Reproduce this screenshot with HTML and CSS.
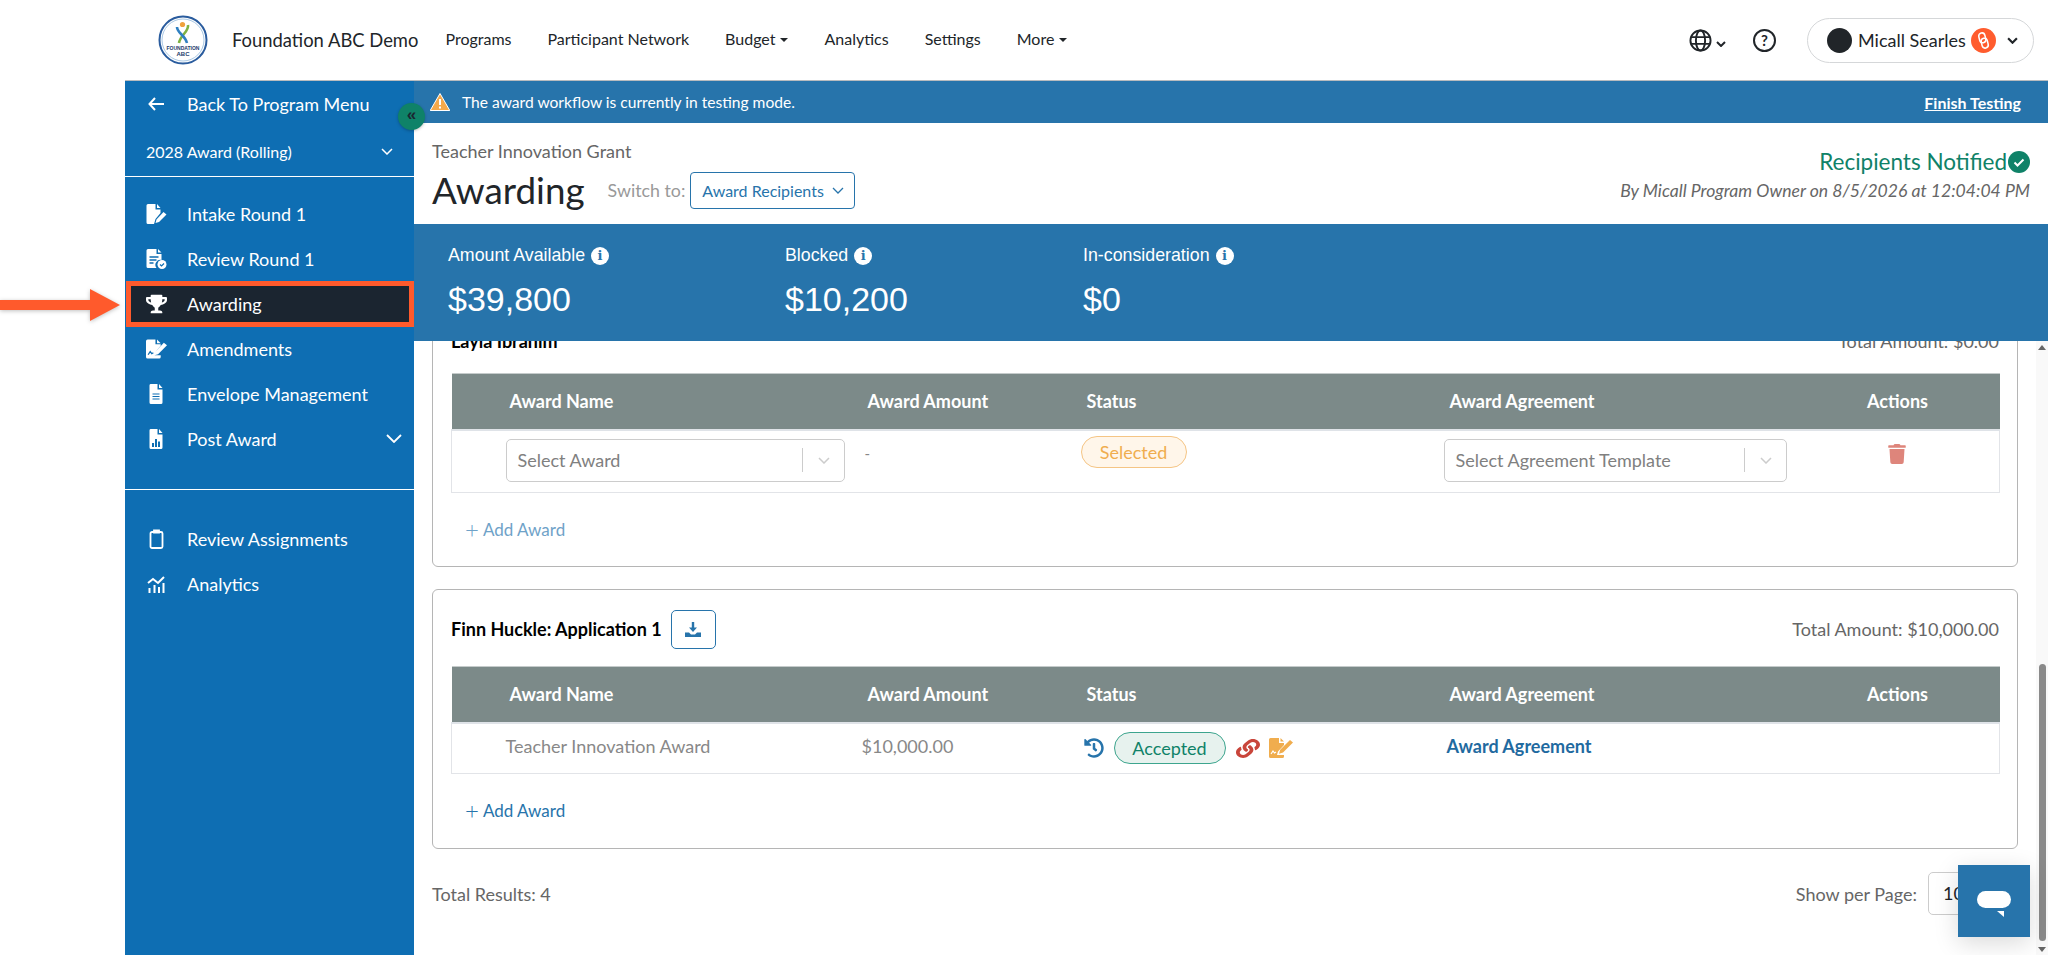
FILE: index.html
```html
<!DOCTYPE html>
<html lang="en">
<head>
    <meta charset="UTF-8">
    <meta name="viewport" content="width=device-width, initial-scale=1.0">
    <title>Awarding</title>
    <link rel="stylesheet" href="styles.css">
</head>
<body>
    <!-- top nav -->
    <header class="topnav">
        <svg class="logo" viewBox="0 0 50 50">
            <circle cx="25" cy="25" r="23.5" fill="#fff" stroke="#2a5c9e" stroke-width="2"/>
            <circle cx="25" cy="25" r="21" fill="none" stroke="#a9c8e4" stroke-width="1"/>
            <path d="M30 10c1 7-8 10-9 18" fill="none" stroke="#7fb241" stroke-width="2.6"/>
            <path d="M19 12c0 6 8 8 10 16" fill="none" stroke="#2f80c2" stroke-width="2.6"/>
            <circle cx="24.500" cy="9.500" r="2.600" fill="#f0a13c"/>
            <text x="25" y="35" class="logo-small">FOUNDATION</text>
            <text x="25" y="41" class="logo-big">ABC</text>
        </svg>
        <span class="brand">Foundation ABC Demo</span>
        <nav class="mainnav">
            <a>Programs</a>
            <a>Participant Network</a>
            <a class="caret">Budget</a>
            <a>Analytics</a>
            <a>Settings</a>
            <a class="caret">More</a>
        </nav>
        <div class="nav-right">
            <svg class="globe" viewBox="0 0 24 24" fill="none" stroke="#212529" stroke-width="2">
                <circle cx="12" cy="12" r="10.5"/>
                <ellipse cx="12" cy="12" rx="4.8" ry="10.5"/>
                <path d="M2 8.5h20M2 15.5h20"/>
            </svg>
            <svg class="chev-sm" viewBox="0 0 10 6" fill="none" stroke="#212529" stroke-width="2"><path d="M1 1l4 4 4-4"/></svg>
            <span class="help">?</span>
            <div class="user-pill">
                <span class="avatar"></span>
                <span class="user-name">Micall Searles</span>
                <svg class="user-badge" viewBox="0 0 24 24">
                    <circle cx="12" cy="12" r="12" fill="#ff5c2e"/>
                    <g fill="none" stroke="#fff" stroke-width="1.5" transform="rotate(-14 12 12)">
                        <rect x="8.500" y="4.500" width="6" height="9.500" rx="3"/>
                        <rect x="9.500" y="10" width="6" height="9.500" rx="3"/>
                    </g>
                </svg>
                <svg class="chev-user" viewBox="0 0 10 6" fill="none" stroke="#212529" stroke-width="2"><path d="M1 1l4 4 4-4"/></svg>
            </div>
        </div>
    </header>

    <div class="layout">
        <div class="gutter"></div>

        <aside class="sidebar">
            <div class="side-back">
                <svg class="back-arrow" viewBox="0 0 16 14" fill="none" stroke="#fff" stroke-width="2"><path d="M7 1L1.5 7 7 13M2 7h14"/></svg>
                <span>Back To Program Menu</span>
            </div>
            <div class="side-select">
                <span>2028 Award (Rolling)</span>
                <svg class="side-chev" viewBox="0 0 12 7" fill="none" stroke="#fff" stroke-width="1.5"><path d="M1 1l5 5 5-5"/></svg>
            </div>
            <ul class="side-menu first">
                <li><svg class="side-icon" viewBox="0 0 20 20" fill="#fff"><path d="M1.5 0H9v5.500h5V9l-5 6-1 3.500-.5 1.500h-6A1.500 1.500 0 0 1 0 18.500v-17A1.500 1.500 0 0 1 1.500 0zM10.500 0L14 4h-3.500zM17 8l3 2.500-7.500 7.500-3.500 1 1-3.500z"/></svg>Intake Round 1</li>
                <li><svg class="side-icon" viewBox="0 0 20 20"><path fill="#fff" d="M1.500 0H10v5h5v6a5 5 0 0 0-5 8H1.500A1.500 1.500 0 0 1 0 17.500v-16A1.500 1.500 0 0 1 1.500 0zM11.500 0L15 3.500h-3.500z"/><path stroke="#0e6eb3" stroke-width="1.500" d="M3 8h9M3 11h7M3 14h4"/><circle cx="15.500" cy="15.500" r="4.500" fill="#fff"/><path d="M13.500 15.500l1.500 1.500 2.500-2.500" fill="none" stroke="#0e6eb3" stroke-width="1.200"/></svg>Review Round 1</li>
                <li class="active"><svg class="side-icon" viewBox="0 0 576 512" fill="#fff"><path d="M552 64H448V24c0-13.300-10.700-24-24-24H152c-13.300 0-24 10.700-24 24v40H24C10.700 64 0 74.700 0 88v56c0 35.700 22.500 72.400 61.900 100.700 31.500 22.700 69.800 37.100 110 41.700C203.300 338.500 240 360 240 360v72h-48c-35.300 0-64 20.700-64 56v12c0 6.600 5.400 12 12 12h296c6.600 0 12-5.400 12-12v-12c0-35.300-28.700-56-64-56h-48v-72s36.700-21.500 68.100-73.600c40.300-4.600 78.700-19 110-41.700 39.300-28.300 61.900-65 61.900-100.700V88c0-13.300-10.700-24-24-24zM99.300 192.800C74.900 175.200 64 155.600 64 144v-16h64.200c1 32.600 5.800 61.200 12.800 86.200-15.100-5.200-29.200-12.400-41.700-21.400zM512 144c0 16.100-17.700 36.100-35.300 48.800-12.500 9-26.700 16.200-41.800 21.400 7-25 11.800-53.600 12.800-86.200H512v16z"/></svg>Awarding</li>
                <li><svg class="side-icon" viewBox="0 0 20 18"><path fill="#fff" d="M1.500 0H9v4.500h5V6l-5 5.500-1 3.500 6 0v1.500A1.500 1.500 0 0 1 12.500 18h-11A1.500 1.500 0 0 1 0 16.500v-15A1.500 1.500 0 0 1 1.500 0zM10.500 0L14 3.500h-3.500zM17 3l3 2.500-8.500 8.500-3.500 1 1-3.500z"/><path d="M2 14.500l2-3 1.500 2 1.500-1" fill="none" stroke="#0e6eb3" stroke-width="1.200"/></svg>Amendments</li>
                <li><svg class="side-icon" viewBox="0 0 20 20"><path fill="#fff" d="M4 0h7v5.500h5v13A1.500 1.500 0 0 1 14.500 20h-10A1.500 1.500 0 0 1 3 18.500v-17A1.500 1.500 0 0 1 4 0zM12.500 0L16 4h-3.500z"/><path stroke="#0e6eb3" stroke-width="1.100" d="M6 10h7M6 12.500h7M6 15h7"/></svg>Envelope Management</li>
                <li><svg class="side-icon" viewBox="0 0 20 20"><path fill="#fff" d="M4 0h7v5.500h5v13A1.500 1.500 0 0 1 14.500 20h-10A1.500 1.500 0 0 1 3 18.500v-17A1.500 1.500 0 0 1 4 0zM12.500 0L16 4h-3.500z"/><path stroke="#0e6eb3" stroke-width="2" d="M6.500 18v-4M9.500 18v-8M12.500 18v-5.500"/></svg>Post Award<svg class="post-chev" viewBox="0 0 16 9" fill="none" stroke="#fff" stroke-width="1.800"><path d="M1 1l7 7 7-7"/></svg></li>
            </ul>
            <ul class="side-menu second">
                <li><svg class="side-icon" viewBox="0 0 20 20" fill="none" stroke="#fff" stroke-width="1.800"><rect x="4" y="3" width="12" height="16" rx="1.500"/><path d="M7.500 3.500h5V1.500h-5z" fill="#fff"/></svg>Review Assignments</li>
                <li><svg class="side-icon" viewBox="0 0 20 20" fill="none" stroke="#fff" stroke-width="2"><path d="M3 19v-5M8 19v-8M12.500 19v-6M17 19V9M1.500 9l5-4 5 4 6-6"/></svg>Analytics</li>
            </ul>
            <span class="collapse-btn">«</span>
        </aside>

        <main class="main">
            <div class="test-banner">
                <svg class="warn" viewBox="0 0 20 18"><path d="M10 0.500L19.800 17.500H0.200z" fill="#f5a94a" stroke="#fff" stroke-width="1"/><path d="M10 6v6M10 13.500v2" stroke="#fff" stroke-width="2"/></svg>
                <span class="test-text">The award workflow is currently in testing mode.</span>
                <a class="finish">Finish Testing</a>
            </div>

            <section class="page-head">
                <div>
                    <div class="grant-name">Teacher Innovation Grant</div>
                    <div class="title-row">
                        <h1>Awarding</h1>
                        <span class="switch-label">Switch to:</span>
                        <div class="switch-btn">Award Recipients
                            <svg viewBox="0 0 12 7" fill="none" stroke="#2774ab" stroke-width="1.300"><path d="M1 1l5 5 5-5"/></svg>
                        </div>
                    </div>
                </div>
                <div class="head-right">
                    <div class="notified">Recipients Notified<svg viewBox="0 0 22 22"><circle cx="11" cy="11" r="11" fill="#0f8268"/><path d="M6.500 11.500l3 3 6-6" fill="none" stroke="#fff" stroke-width="2"/></svg></div>
                    <div class="notified-by">By Micall Program Owner on 8/5/2026 at 12:04:04 PM</div>
                </div>
            </section>

            <section class="stats">
                <div class="stat stat-a">
                    <div class="stat-label">Amount Available <span class="info">i</span></div>
                    <div class="stat-value">$39,800</div>
                </div>
                <div class="stat stat-b">
                    <div class="stat-label">Blocked <span class="info">i</span></div>
                    <div class="stat-value">$10,200</div>
                </div>
                <div class="stat">
                    <div class="stat-label">In-consideration <span class="info">i</span></div>
                    <div class="stat-value">$0</div>
                </div>
            </section>

            <div class="content">
                <section class="card card-clipped">
                    <div class="card-head">
                        <div class="applicant">Layla Ibrahim</div>
                        <div class="total">Total Amount: $0.00</div>
                    </div>
                    <table class="awards">
                        <colgroup><col class="c0"><col class="c1"><col class="c2"><col class="c3"><col class="c4"><col class="c5"></colgroup>
                        <thead>
                            <tr><th></th><th>Award Name</th><th>Award Amount</th><th>Status</th><th>Award Agreement</th><th class="act">Actions</th></tr>
                        </thead>
                        <tbody>
                            <tr class="edit-row">
                                <td></td>
                                <td><div class="select-box"><span>Select Award</span><i class="sel-sep"></i><svg viewBox="0 0 12 7" fill="none" stroke="#ccc" stroke-width="1.500"><path d="M1 1l5 5 5-5"/></svg></div></td>
                                <td class="dash">-</td>
                                <td><span class="pill pill-selected">Selected</span></td>
                                <td><div class="select-box wide"><span>Select Agreement Template</span><i class="sel-sep"></i><svg viewBox="0 0 12 7" fill="none" stroke="#ccc" stroke-width="1.500"><path d="M1 1l5 5 5-5"/></svg></div></td>
                                <td class="act"><svg class="trash" viewBox="0 0 448 512" fill="#de857b"><path d="M432 32H312l-9.400-18.700A24 24 0 0 0 281.100 0H166.800a23.720 23.720 0 0 0-21.400 13.300L136 32H16A16 16 0 0 0 0 48v32a16 16 0 0 0 16 16h416a16 16 0 0 0 16-16V48a16 16 0 0 0-16-16zM53.200 467a48 48 0 0 0 47.900 45h245.800a48 48 0 0 0 47.900-45L416 128H32z"/></svg></td>
                            </tr>
                        </tbody>
                    </table>
                    <a class="add-award faded"><span class="plus">+</span> Add Award</a>
                </section>

                <section class="card">
                    <div class="card-head">
                        <div class="applicant">Finn Huckle: Application 1
                            <span class="dl-btn"><svg viewBox="0 0 16 15" fill="#2774ab"><path d="M6.800 0h2.400v5.500H12L8 10 4 5.500h2.800zM0 10.500h4l2 2h4l2-2h4V15H0z"/></svg></span>
                        </div>
                        <div class="total">Total Amount: $10,000.00</div>
                    </div>
                    <table class="awards">
                        <colgroup><col class="c0"><col class="c1"><col class="c2"><col class="c3"><col class="c4"><col class="c5"></colgroup>
                        <thead>
                            <tr><th></th><th>Award Name</th><th>Award Amount</th><th>Status</th><th>Award Agreement</th><th class="act">Actions</th></tr>
                        </thead>
                        <tbody>
                            <tr class="done-row">
                                <td></td>
                                <td class="muted">Teacher Innovation Award</td>
                                <td class="muted">$10,000.00</td>
                                <td>
                                    <div class="status-cell">
                                        <svg class="ic-history" viewBox="0 0 512 512" fill="#2774ab"><path d="M504 255.531c.253 136.640-111.180 248.372-247.820 248.468-59.015.042-113.223-20.530-155.822-54.911-11.077-8.940-11.905-25.541-1.839-35.607l11.267-11.267c8.609-8.609 22.353-9.551 31.891-1.984C173.062 425.135 212.781 440 256 440c101.705 0 184-82.311 184-184 0-101.705-82.311-184-184-184-48.814 0-93.149 18.969-126.068 49.932l50.754 50.754c10.080 10.080 2.941 27.314-11.313 27.314H24c-8.837 0-16-7.163-16-16V38.627c0-14.254 17.234-21.393 27.314-11.314l49.372 49.372C129.209 34.136 189.552 8 256 8c136.810 0 247.747 110.780 248 247.531zm-180.912 78.784l9.823-12.630c8.138-10.463 6.253-25.542-4.210-33.679L288 256.349V152c0-13.255-10.745-24-24-24h-16c-13.255 0-24 10.745-24 24v135.651l65.409 50.874c10.463 8.137 25.541 6.253 33.679-4.210z"/></svg>
                                        <span class="pill pill-accepted">Accepted</span>
                                        <svg class="ic-link" viewBox="0 0 512 512" preserveAspectRatio="none" fill="#c9453a"><path d="M326.612 185.391c59.747 59.809 58.927 155.698.36 214.590-.11.12-.24.25-.36.37l-67.200 67.200c-59.270 59.270-155.699 59.262-214.960 0-59.270-59.260-59.270-155.700 0-214.960l37.106-37.106c9.840-9.840 26.786-3.300 27.294 10.606.648 17.722 3.826 35.527 9.690 52.721 1.986 5.822.567 12.262-3.783 16.612l-13.087 13.087c-28.026 28.026-28.905 73.660-1.155 101.960 28.024 28.579 74.086 28.749 102.325.51l67.200-67.190c28.191-28.191 28.073-73.757 0-101.830-3.701-3.694-7.429-6.564-10.341-8.569a16.037 16.037 0 0 1-6.947-12.606c-.396-10.567 3.348-21.456 11.698-29.806l21.054-21.055c5.521-5.521 14.182-6.199 20.584-1.731a152.482 152.482 0 0 1 20.522 17.197zM467.547 44.449c-59.261-59.262-155.690-59.270-214.960 0l-67.200 67.200c-.12.12-.25.25-.36.37-58.566 58.892-59.387 154.781.36 214.590a152.454 152.454 0 0 0 20.521 17.196c6.402 4.468 15.064 3.789 20.584-1.731l21.054-21.055c8.350-8.350 12.094-19.239 11.698-29.806a16.037 16.037 0 0 0-6.947-12.606c-2.912-2.005-6.640-4.875-10.341-8.569-28.073-28.073-28.191-73.639 0-101.830l67.200-67.190c28.239-28.239 74.300-28.069 102.325.51 27.750 28.300 26.872 73.934-1.155 101.960l-13.087 13.087c-4.350 4.350-5.769 10.790-3.783 16.612 5.864 17.194 9.042 34.999 9.690 52.721.509 13.906 17.454 20.446 27.294 10.606l37.106-37.106c59.271-59.259 59.271-155.699.001-214.959z"/></svg>
                                        <svg class="ic-sign" viewBox="0 0 24 20"><path fill="#f0ad4e" d="M1.500 0H10v5h5v2l-6 6.500-1 3.500h7v1.500a1.500 1.500 0 0 1-1.500 1.500h-12A1.500 1.500 0 0 1 0 18.500v-17A1.500 1.500 0 0 1 1.500 0zM11.500 0L15 3.500h-3.500zM21 2l3 2.500-10 10-4 1.200 1.200-4z"/><path d="M2 16l2-3 1.500 2 1.500-1" fill="none" stroke="#fff" stroke-width="1.200"/></svg>
                                    </div>
                                </td>
                                <td class="agreement-cell"><a class="agreement">Award Agreement</a></td>
                                <td></td>
                            </tr>
                        </tbody>
                    </table>
                    <a class="add-award"><span class="plus">+</span> Add Award</a>
                </section>

                <div class="list-foot">
                    <span>Total Results: 4</span>
                    <div class="per-page">Show per Page: <span class="per-box">10</span></div>
                </div>

                <div class="scrollbar">
                    <i class="sb-up"></i>
                    <i class="sb-thumb"></i>
                    <i class="sb-down"></i>
                </div>
            </div>
        </main>
    </div>

    <!-- annotation arrow over the screenshot -->
    <svg class="callout" viewBox="0 0 120 32"><path d="M0 11h90V0l30 16-30 16V21H0z" fill="#ff5a2c"/></svg>

    <div class="chat-btn">
        <svg viewBox="0 0 34 26"><rect width="34" height="17" rx="8.5" fill="#fff"/><path d="M20 20h7v6z" fill="#fff"/></svg>
    </div>
</body>
</html>
```

FILE: styles.css
```css
:root {
    --side-blue: #0e6eb3;
    --band-blue: #2774ab;
    --green: #0f8268;
    --orange: #ff5a2c;
    --amber: #f0ad4e;
    --head-grey: #7c8a89;
    --rule: #b9bcbf;
}

* {
    box-sizing: border-box;
}

body {
    margin: 0;
    height: 955px;
    overflow: hidden;
    background: #fff;
    color: #212529;
    font-family: Lato, "Liberation Sans", sans-serif;
    font-size: 16px;
}

/* top nav */
.topnav {
    display: flex;
    align-items: center;
    height: 80px;
    padding-left: 158px;
}

.logo {
    width: 50px;
    height: 50px;
}

.logo-small,
.logo-big {
    font-family: "Liberation Sans", sans-serif;
    font-weight: 700;
    text-anchor: middle;
    fill: #233a6b;
}

.logo-small {
    font-size: 5px;
}

.logo-big {
    font-size: 6px;
}

.brand {
    margin-left: 24px;
    font-size: 18.4px;
}

.mainnav {
    display: flex;
    gap: 36px;
    margin-left: 27px;
    margin-bottom: 4px;
    font-size: 16px;
}

.caret::after {
    content: "";
    display: inline-block;
    margin-left: 5px;
    vertical-align: 3px;
    border-top: 4px solid #212529;
    border-left: 4px solid transparent;
    border-right: 4px solid transparent;
}

.nav-right {
    display: flex;
    align-items: center;
    margin-left: auto;
    margin-right: 14px;
}

.globe {
    width: 23px;
    height: 23px;
}

.chev-sm {
    width: 10px;
    height: 6px;
    margin: 7px 0 0 4px;
}

.help {
    display: flex;
    align-items: center;
    justify-content: center;
    width: 23px;
    height: 23px;
    margin-left: 27px;
    border: 2px solid #212529;
    border-radius: 50%;
    font-size: 15px;
    font-weight: 700;
}

.user-pill {
    display: flex;
    align-items: center;
    width: 227px;
    height: 45px;
    margin-left: 31px;
    padding-left: 19px;
    border: 1px solid #d5d7d9;
    border-radius: 23px;
}

.avatar {
    width: 25px;
    height: 25px;
    border-radius: 50%;
    background: #212529;
}

.user-name {
    margin-left: 6px;
    font-size: 18px;
}

.user-badge {
    width: 25px;
    height: 25px;
    margin-left: 5px;
}

.chev-user {
    width: 11px;
    height: 7px;
    margin-left: 11px;
}

/* shell */
.layout {
    display: flex;
    height: 875px;
}

.gutter {
    width: 125px;
}

.sidebar {
    position: relative;
    width: 289px;
    border-top: 1px solid var(--rule);
    background: var(--side-blue);
    color: #fff;
    font-size: 18px;
}

.side-back {
    display: flex;
    align-items: center;
    height: 47px;
    padding: 0 0 2px 23px;
}

.back-arrow {
    width: 16px;
    height: 14px;
    margin-right: 23px;
}

.side-select {
    display: flex;
    align-items: center;
    justify-content: space-between;
    height: 49px;
    padding: 0 21px 2px;
    border-bottom: 1px solid #fff;
    font-size: 16px;
}

.side-chev {
    width: 12px;
    height: 7px;
}

.side-menu {
    margin: 0;
    padding: 0;
    list-style: none;
}

.side-menu li {
    display: flex;
    align-items: center;
    position: relative;
    height: 45px;
    padding-left: 21px;
}

.side-menu.first {
    padding-top: 14px;
    height: 313px;
    border-bottom: 1px solid #fff;
}

.side-menu.second {
    padding-top: 26px;
}

.side-icon {
    width: 21px;
    height: 20px;
    margin-right: 20px;
    flex: none;
}

.side-menu li.active {
    height: 46px;
    margin: 0 0 -1px 1px;
    padding-left: 15px;
    border: 5px solid var(--orange);
    background: #1b2530;
}

.post-chev {
    position: absolute;
    right: 12px;
    width: 16px;
    height: 9px;
}

.collapse-btn {
    position: absolute;
    top: 22px;
    right: -11px;
    width: 27px;
    height: 27px;
    border-radius: 50%;
    background: var(--green);
    box-shadow: 0 1px 3px rgba(0,0,0,0.25);
    color: #1b2530;
    font-family: "Liberation Sans", sans-serif;
    font-size: 17px;
    font-weight: 700;
    line-height: 23px;
    text-align: center;
    z-index: 2;
}

.main {
    display: flex;
    flex-direction: column;
    flex: 1;
    min-width: 0;
    border-top: 1px solid var(--rule);
}

.test-banner {
    display: flex;
    align-items: center;
    height: 42px;
    padding: 0 27px 0 16px;
    background: var(--band-blue);
    color: #fff;
    font-size: 15.6px;
}

.warn {
    width: 20px;
    height: 18px;
    margin-right: 12px;
}

.finish {
    margin-left: auto;
    font-size: 16px;
    font-weight: 700;
    text-decoration: underline;
}

.page-head {
    display: flex;
    justify-content: space-between;
    height: 101px;
    padding: 17px 18px 0;
}

.grant-name {
    color: #666;
    font-size: 18px;
}

.title-row {
    display: flex;
    align-items: center;
    margin-top: 5px;
}

h1 {
    margin: 0;
    font-size: 36.8px;
    font-weight: 400;
    line-height: 46px;
}

.switch-label {
    margin-left: 23px;
    color: #999;
    font-size: 17.8px;
}

.switch-btn {
    display: flex;
    align-items: center;
    width: 165px;
    height: 37px;
    margin-left: 5px;
    padding-left: 11px;
    border: 1px solid var(--band-blue);
    border-radius: 4px;
    color: var(--band-blue);
    font-size: 16px;
}

.switch-btn svg {
    width: 12px;
    height: 7px;
    margin-left: 8px;
}

.head-right {
    padding-top: 8px;
    text-align: right;
}

.notified {
    display: flex;
    align-items: center;
    justify-content: flex-end;
    color: var(--green);
    font-size: 22.5px;
}

.notified svg {
    width: 22px;
    height: 22px;
    margin-left: 1px;
}

.notified-by {
    margin-top: 5px;
    color: #666;
    font-size: 17.6px;
    font-style: italic;
}

.stats {
    display: flex;
    height: 117px;
    padding: 21px 0 0 34px;
    background: var(--band-blue);
    color: #fff;
    font-family: "Liberation Sans", sans-serif;
}

.stat-a {
    width: 337px;
}

.stat-b {
    width: 298px;
}

.stat-label {
    display: flex;
    align-items: center;
    gap: 6px;
    font-size: 17.8px;
}

.info {
    display: inline-block;
    width: 18px;
    height: 18px;
    border-radius: 50%;
    background: #fff;
    color: var(--band-blue);
    font-family: "DejaVu Serif", serif;
    font-size: 13px;
    font-weight: 700;
    line-height: 18px;
    text-align: center;
}

.stat-value {
    margin-top: 14px;
    font-size: 34px;
}

/* awards list */
.content {
    position: relative;
    flex: 1;
    min-height: 0;
    overflow: hidden;
    padding: 0 30px 0 18px;
}

.card {
    margin-bottom: 22px;
    padding: 0 18px;
    border: 1px solid #b5b5b5;
    border-radius: 6px;
}

.card-clipped {
    margin-top: -45px;
    height: 271px;
}

.card-head {
    display: flex;
    align-items: center;
    justify-content: space-between;
    height: 76px;
    padding-top: 2px;
}

.card-clipped .card-head {
    align-items: flex-end;
    padding-bottom: 21px;
}

.applicant {
    display: flex;
    align-items: center;
    color: #000;
    font-size: 18px;
    font-weight: 700;
}

.total {
    color: #666;
    font-size: 18px;
}

.dl-btn {
    display: flex;
    align-items: center;
    justify-content: center;
    width: 45px;
    height: 39px;
    margin-left: 9px;
    border: 1px solid var(--band-blue);
    border-radius: 5px;
}

.dl-btn svg {
    width: 16px;
    height: 15px;
}

.awards {
    width: 1548px;
    border-collapse: collapse;
    table-layout: fixed;
}

.c0 { width: 54px; }
.c1 { width: 354px; }
.c2 { width: 221px; }
.c3 { width: 363px; }
.c4 { width: 357px; }
.c5 { width: 199px; }

.awards th {
    height: 56px;
    padding: 0 0 0 6px;
    border-top: 1px solid #c5cbcb;
    border-bottom: 2px solid #dfe3e8;
    background: var(--head-grey);
    color: #fff;
    font-size: 18px;
    font-weight: 700;
    text-align: left;
}

.awards th:nth-child(2) {
    padding-left: 4px;
}

.awards th:nth-child(3) {
    padding-left: 8px;
}

.awards th.act,
.awards td.act {
    padding-left: 0;
    padding-right: 5px;
    text-align: center;
}

.awards td {
    padding: 0;
    border-bottom: 1px solid #e2e4e8;
    vertical-align: top;
}

.awards td:first-child {
    border-left: 1px solid #e2e4e8;
}

.awards td:last-child {
    border-right: 1px solid #e2e4e8;
}

.edit-row td {
    height: 63px;
    padding-top: 8px;
}

.done-row td {
    height: 51px;
    vertical-align: middle;
}

.done-row td.muted,
.done-row td.agreement-cell {
    padding-bottom: 4px;
}

.muted {
    color: #888;
    font-size: 18px;
}

.done-row td.muted:nth-child(3) {
    padding-left: 2px;
}

.select-box {
    display: flex;
    align-items: center;
    width: 339px;
    height: 43px;
    padding-left: 11px;
    border: 1px solid #ccc;
    border-radius: 5px;
    color: #808080;
    font-size: 18px;
}

.select-box.wide {
    width: 343px;
}

.select-box span {
    flex: 1;
}

.sel-sep {
    width: 1px;
    height: 24px;
    background: #ccc;
}

.select-box svg {
    width: 12px;
    height: 7px;
    margin: 0 14px 0 15px;
}

.dash {
    padding: 13px 0 0 5px !important;
    color: #888;
    font-size: 15px;
}

.pill {
    display: inline-flex;
    align-items: center;
    justify-content: center;
    border-radius: 16px;
    font-size: 18px;
}

.pill-selected {
    width: 106px;
    height: 32px;
    margin-top: -3px;
    border: 1px solid #f5c585;
    background: #fff6ea;
    color: var(--amber);
}

.pill-accepted {
    width: 112px;
    height: 32px;
    border: 1px solid #3da58e;
    background: #e7f2ee;
    color: var(--green);
}

.status-cell {
    display: flex;
    align-items: center;
    margin-left: 3px;
}

.ic-history {
    width: 20px;
    height: 20px;
    margin-right: 10px;
}

.ic-link {
    width: 24px;
    height: 19px;
    margin-left: 10px;
}

.ic-sign {
    width: 24px;
    height: 20px;
    margin-left: 9px;
}

.trash {
    width: 18px;
    height: 20px;
    margin-top: 5px;
}

.agreement {
    margin-left: 3px;
    color: #1f6aa0;
    font-size: 18px;
    font-weight: 700;
}

.add-award {
    display: flex;
    align-items: center;
    gap: 4px;
    height: 24px;
    margin: 24px 0 0 14px;
    color: var(--band-blue);
    font-size: 17px;
}

.plus {
    font-size: 24px;
    font-weight: 300;
    line-height: 24px;
}

.add-award.faded {
    color: #6fa2c8;
}

.card + .card .add-award {
    margin-bottom: 26px;
}

.list-foot {
    display: flex;
    align-items: center;
    justify-content: space-between;
    height: 45px;
    color: #666;
    font-size: 18px;
}

.per-page {
    display: flex;
    align-items: center;
    gap: 11px;
}

.per-box {
    width: 90px;
    height: 43px;
    padding: 9px 14px;
    border: 1px solid #ccc;
    border-radius: 5px;
    color: #212529;
}

.scrollbar {
    position: absolute;
    top: 0;
    right: 0;
    bottom: 0;
    width: 12px;
    background: #f9f9f9;
}

.scrollbar i {
    position: absolute;
}

.sb-thumb {
    top: 323px;
    left: 3px;
    width: 7px;
    height: 277px;
    border-radius: 4px;
    background: #8a8a8a;
}

.sb-up,
.sb-down {
    left: 2px;
    border-left: 4px solid transparent;
    border-right: 4px solid transparent;
}

.sb-up {
    top: 4px;
    border-bottom: 5px solid #666;
}

.sb-down {
    bottom: 3px;
    border-top: 5px solid #666;
}

/* things that float over the page */
.callout {
    position: absolute;
    top: 289px;
    left: 0;
    width: 120px;
    height: 32px;
    filter: drop-shadow(0 1px 2px rgba(0,0,0,0.25));
}

.chat-btn {
    position: fixed;
    top: 865px;
    left: 1958px;
    width: 72px;
    height: 72px;
    padding: 26px 0 0 19px;
    background: var(--band-blue);
    box-shadow: 0 6px 24px rgba(0,0,0,0.15);
}

.chat-btn svg {
    display: block;
    width: 34px;
    height: 26px;
}
```
